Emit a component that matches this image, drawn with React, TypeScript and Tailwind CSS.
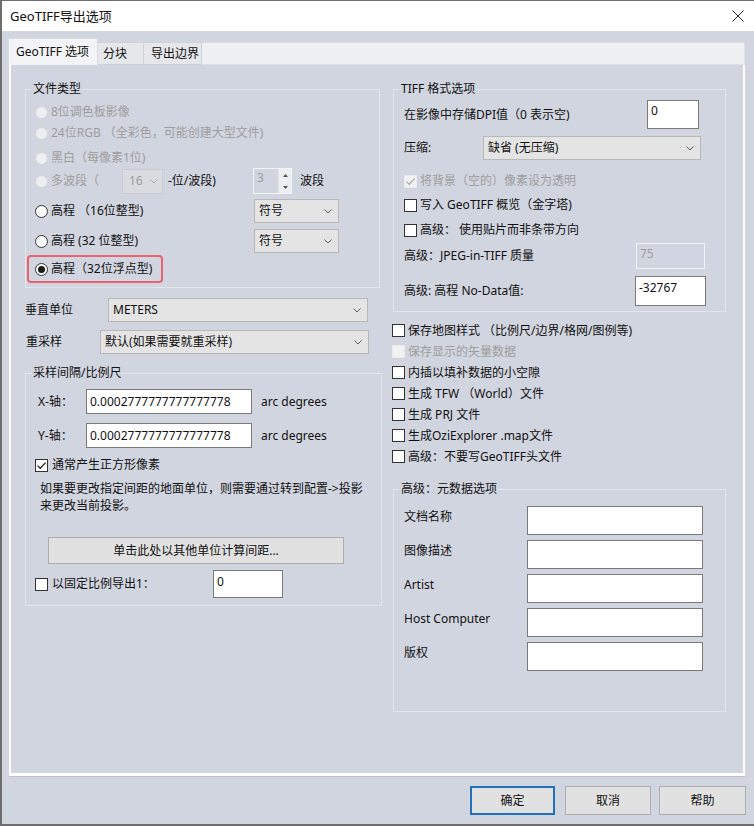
import React from "react";

function Radio({ checked = false, disabled = false }: { checked?: boolean; disabled?: boolean }) {
  return (
    <span
      className={`flex h-[13px] w-[13px] shrink-0 items-center justify-center rounded-full border ${
        disabled ? "border-[#d3d5da] bg-[#eceef1]" : "border-[#333333] bg-white"
      }`}
    >
      {checked && <span className="h-[7px] w-[7px] rounded-full bg-[#1a1a1a]" />}
    </span>
  );
}

function Check({ checked = false, disabled = false }: { checked?: boolean; disabled?: boolean }) {
  return (
    <span
      className={`flex h-[13px] w-[13px] shrink-0 items-center justify-center border ${
        disabled ? "border-[#e9eaed] bg-[#f1f2f4]" : "border-[#333333] bg-white"
      }`}
    >
      {checked && (
        <svg width="11" height="11" viewBox="0 0 11 11">
          <path
            d="M1.5 5.6 L4.2 8.3 L9.6 2.6"
            fill="none"
            stroke={disabled ? "#a9a9a9" : "#222222"}
            strokeWidth="1.3"
          />
        </svg>
      )}
    </span>
  );
}

function Chevron({ color = "#5f5f5f" }: { color?: string }) {
  return (
    <svg width="8" height="5" viewBox="0 0 8 5" className="shrink-0">
      <path d="M0.5 0.5 L4 4 L7.5 0.5" fill="none" stroke={color} strokeWidth="1" />
    </svg>
  );
}

function Select({ value, className = "" }: { value: string; className?: string }) {
  return (
    <div
      className={`flex shrink-0 items-center justify-between border border-[#b8b8b8] bg-[#e4e4e4] pl-[4px] pr-[6px] ${className}`}
    >
      <span>{value}</span>
      <Chevron />
    </div>
  );
}

function Field({ value = "", className = "" }: { value?: string; className?: string }) {
  return <div className={`shrink-0 border border-[#7a7a7a] bg-white px-[3px] ${className}`}>{value}</div>;
}

function CheckRow({
  label,
  checked = false,
  disabled = false,
  className = "",
}: {
  label: string;
  checked?: boolean;
  disabled?: boolean;
  className?: string;
}) {
  return (
    <div className={`flex items-center gap-[3px] ${className}`}>
      <Check checked={checked} disabled={disabled} />
      <span className={disabled ? "text-[#9d9d9d]" : ""}>{label}</span>
    </div>
  );
}

export default function App() {
  const meta = ["文档名称", "图像描述", "Artist", "Host Computer", "版权"];
  return (
    <div className="flex h-[826px] w-[754px] flex-col overflow-hidden border-t border-b-2 border-l-2 border-[#6e6e6e] bg-[#d1d5e0] font-['Noto_Sans','Noto_Sans_CJK_SC',sans-serif] text-[12px] leading-[16px] text-[#111111]">
      {/* Title bar */}
      <div className="flex h-[30px] shrink-0 items-center justify-between bg-white pl-[8px] pr-[10px] text-[13px]">
        <span>GeoTIFF导出选项</span>
        <svg width="12" height="12" viewBox="0 0 12 12">
          <path d="M0.5 0.5 L11.5 11.5 M11.5 0.5 L0.5 11.5" stroke="#222222" strokeWidth="1" />
        </svg>
      </div>

      {/* Tabs */}
      <div className="ml-[6px] mt-[7px] flex h-[27px] w-[737px] shrink-0 items-end">
        <div className="flex h-[27px] w-[90px] items-center border border-b-0 border-[#d9dbe0] bg-[#f3f4f6] pl-[7px]">
          GeoTIFF 选项
        </div>
        <div className="flex h-[23px] w-[46px] items-center border-t border-r border-b border-[#cfd2d8] bg-[#e6e7eb] pl-[5px]">
          分块
        </div>
        <div className="flex h-[23px] w-[58px] items-center border-t border-r border-b border-[#cfd2d8] bg-[#e6e7eb] pl-[7px]">
          导出边界
        </div>
        <div className="h-[23px] flex-1 border-t border-r border-b border-[#dcdee3] bg-[#eff0f2]" />
      </div>

      {/* Tab page */}
      <div className="ml-[7px] flex h-[711px] w-[736px] shrink-0 gap-[11px] border-r-2 border-b-[3px] border-l-2 border-white pl-[14px] pt-[16px] shadow-[0_1px_0_#bfc2c9]">
        {/* Left column */}
        <div className="flex w-[357px] shrink-0 flex-col">
          <fieldset className="w-[355px] min-w-0 border border-[#e2e5ec] pb-[4px] pl-[9px]">
            <legend className="ml-[-3px] px-[1px]">文件类型</legend>
            <div className="mt-[5px] flex h-[20px] items-center gap-[3px] text-[#9d9d9d]">
              <Radio disabled />
              <span>8位调色板影像</span>
            </div>
            <div className="mt-[1px] flex h-[20px] items-center gap-[3px] text-[#9d9d9d]">
              <Radio disabled />
              <span>24位RGB （全彩色，可能创建大型文件)</span>
            </div>
            <div className="mt-[5px] flex h-[20px] items-center gap-[3px] text-[#9d9d9d]">
              <Radio disabled />
              <span>黑白（每像素1位)</span>
            </div>
            <div className="flex h-[26px] items-center text-[#9d9d9d]">
              <Radio disabled />
              <span className="ml-[3px] w-[71px] shrink-0">多波段（</span>
              <div className="flex h-[25px] w-[41px] shrink-0 items-center justify-between border border-[#caccd2] bg-[#d9dbe0] pl-[6px] pr-[4px]">
                <span>16</span>
                <Chevron color="#a8a8a8" />
              </div>
              <span className="ml-[5px] w-[85px] shrink-0 text-[#111111]">-位/波段)</span>
              <div className="flex h-[26px] w-[39px] shrink-0 border border-[#f3f4f6]">
                <div className="w-[24px] pl-[3px] pt-[1px]">3</div>
                <div className="flex w-[13px] flex-col border-l border-[#e4e5e9] bg-[#eceef1]">
                  <div className="flex flex-1 items-center justify-center">
                    <svg width="5" height="3" viewBox="0 0 5 3">
                      <path d="M0 3 L2.5 0 L5 3 Z" fill="#555555" />
                    </svg>
                  </div>
                  <div className="flex flex-1 items-center justify-center">
                    <svg width="5" height="3" viewBox="0 0 5 3">
                      <path d="M0 0 L2.5 3 L5 0 Z" fill="#555555" />
                    </svg>
                  </div>
                </div>
              </div>
              <span className="ml-[8px] text-[#111111]">波段</span>
            </div>
            <div className="mt-[4px] flex h-[26px] items-center">
              <Radio />
              <span className="ml-[3px] w-[203px] shrink-0">高程 （16位整型)</span>
              <Select value="符号" className="h-[24px] w-[85px]" />
            </div>
            <div className="mt-[4px] flex h-[26px] items-center">
              <Radio />
              <span className="ml-[3px] w-[203px] shrink-0">高程 (32 位整型)</span>
              <Select value="符号" className="h-[24px] w-[85px]" />
            </div>
            <div className="ml-[-8px] mt-[1px] flex h-[28px] w-[136px] items-center gap-[3px] rounded-[4px] border-2 border-[#e8636f] pl-[6px]">
              <Radio checked />
              <span>高程（32位浮点型)</span>
            </div>
          </fieldset>

          <div className="mt-[10px] flex h-[24px] items-center">
            <span className="w-[83px] shrink-0">垂直单位</span>
            <Select value="METERS" className="h-[24px] w-[260px]" />
          </div>
          <div className="mt-[8px] flex h-[24px] items-center">
            <span className="w-[75px] shrink-0 pl-[1px]">重采样</span>
            <Select value="默认(如果需要就重采样)" className="h-[24px] w-[269px]" />
          </div>

          <fieldset className="mt-[11px] w-[357px] min-w-0 border border-[#e2e5ec] pb-[7px] pl-[12px]">
            <legend className="ml-[-6px] px-[1px]">采样间隔/比例尺</legend>
            <div className="mt-[8px] flex h-[25px] items-center">
              <span className="w-[48px] shrink-0">X-轴：</span>
              <Field value="0.0002777777777777778" className="flex h-[25px] w-[166px] items-center" />
              <span className="ml-[9px]">arc degrees</span>
            </div>
            <div className="mt-[9px] flex h-[25px] items-center">
              <span className="w-[48px] shrink-0">Y-轴：</span>
              <Field value="0.0002777777777777778" className="flex h-[25px] w-[166px] items-center" />
              <span className="ml-[9px]">arc degrees</span>
            </div>
            <div className="ml-[-3px] mt-[8px] flex h-[18px] items-center gap-[4px]">
              <Check checked />
              <span>通常产生正方形像素</span>
            </div>
            <p className="ml-[2px] mt-[6px] leading-[17px]">
              如果要更改指定间距的地面单位，则需要通过转到配置-&gt;投影
              <br />
              来更改当前投影。
            </p>
            <div className="ml-[10px] mt-[23px] flex h-[27px] w-[296px] items-center justify-center border border-[#adadad] bg-[#e1e1e1]">
              单击此处以其他单位计算间距...
            </div>
            <div className="ml-[-3px] mt-[6px] flex h-[28px] items-center">
              <Check />
              <span className="ml-[4px] w-[161px] shrink-0">以固定比例导出1：</span>
              <Field value="0" className="h-[28px] w-[70px] pt-[3px]" />
            </div>
          </fieldset>
        </div>

        {/* Right column */}
        <div className="flex w-[333px] shrink-0 flex-col">
          <fieldset className="w-[333px] min-w-0 border border-[#e2e5ec] pb-[5px] pl-[10px]">
            <legend className="ml-[-4px] px-[1px]">TIFF 格式选项</legend>
            <div className="mt-[3px] flex h-[29px] items-center">
              <span className="w-[243px] shrink-0">在影像中存储DPI值（0 表示空)</span>
              <Field value="0" className="h-[29px] w-[52px] pt-[2px]" />
            </div>
            <div className="mt-[7px] flex h-[24px] items-center">
              <span className="w-[79px] shrink-0">压缩:</span>
              <Select value="缺省 (无压缩)" className="h-[24px] w-[218px]" />
            </div>
            <CheckRow className="mt-[12px] h-[18px]" checked disabled label="将背景（空的）像素设为透明" />
            <CheckRow className="mt-[6px] h-[18px]" label="写入 GeoTIFF 概览（金字塔)" />
            <CheckRow className="mt-[7px] h-[18px]" label="高级： 使用贴片而非条带方向" />
            <div className="mt-[4px] flex h-[26px] items-center">
              <span className="w-[232px] shrink-0">高级：JPEG-in-TIFF 质量</span>
              <div className="h-[26px] w-[69px] shrink-0 border border-[#f2f3f5] px-[3px] pt-[2px] text-[#9d9d9d]">75</div>
            </div>
            <div className="mt-[7px] flex h-[30px] items-center">
              <span className="w-[231px] shrink-0">高级: 高程 No-Data值:</span>
              <Field value="-32767" className="h-[30px] w-[71px] pt-[3px]" />
            </div>
          </fieldset>

          <div className="ml-[-1px] mt-[8px] flex flex-col">
            <CheckRow className="h-[21px]" label="保存地图样式 （比例尺/边界/格网/图例等)" />
            <CheckRow className="h-[21px]" disabled label="保存显示的矢量数据" />
            <CheckRow className="h-[21px]" label="内插以填补数据的小空隙" />
            <CheckRow className="h-[21px]" label="生成 TFW （World）文件" />
            <CheckRow className="h-[21px]" label="生成 PRJ 文件" />
            <CheckRow className="h-[21px]" label="生成OziExplorer .map文件" />
            <CheckRow className="h-[21px]" label="高级：不要写GeoTIFF头文件" />
          </div>

          <fieldset className="mt-[14px] w-[333px] min-w-0 border border-[#e2e5ec] pb-[40px] pl-[10px]">
            <legend className="ml-[-4px] px-[1px]">高级：元数据选项</legend>
            <div className="mt-[9px] flex flex-col gap-[5px]">
              {meta.map((m) => (
                <div key={m} className="flex h-[29px] items-start">
                  <span className="w-[123px] shrink-0 pt-[3px]">{m}</span>
                  <Field className="h-[29px] w-[176px]" />
                </div>
              ))}
            </div>
          </fieldset>
        </div>
      </div>

      {/* Buttons */}
      <div className="mt-[10px] flex h-[29px] shrink-0 justify-end pr-[8px]">
        <div className="mr-[10px] flex h-[29px] w-[85px] items-center justify-center border-2 border-[#2270b8] bg-[#e1e1e1]">
          确定
        </div>
        <div className="mr-[8px] flex h-[29px] w-[86px] items-center justify-center border border-[#adadad] bg-[#e1e1e1]">
          取消
        </div>
        <div className="flex h-[29px] w-[87px] items-center justify-center border border-[#adadad] bg-[#e1e1e1]">
          帮助
        </div>
      </div>
    </div>
  );
}
